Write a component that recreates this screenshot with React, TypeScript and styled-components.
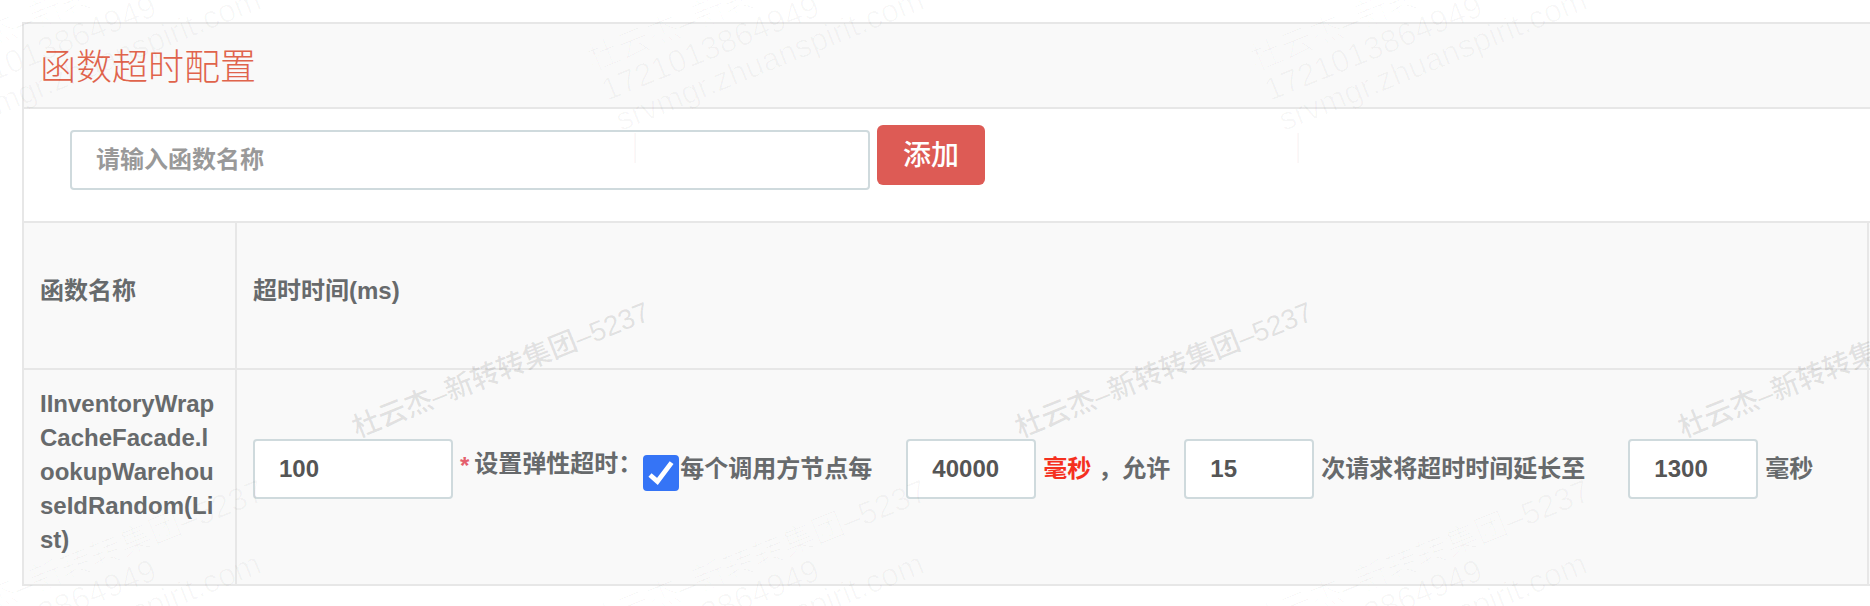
import React, { useState } from 'react';
import styled, { createGlobalStyle } from 'styled-components';

const GlobalStyle = createGlobalStyle`
  *, *::before, *::after { box-sizing: border-box; }
  body {
    margin: 0;
    background: #fff;
    color: #676a6c;
    font-family: "Liberation Sans", "Noto Sans CJK SC", sans-serif;
    font-size: 24px;
    line-height: 34px;
  }
`;

const Page = styled.div`
  position: relative;
  min-height: 100vh;
  padding: 22px 0 20px 22px;
  overflow: hidden;
`;

const Panel = styled.section`
  border: 2px solid #e7e7e7;
  border-width: 2px 0 0 2px;
`;

const PanelHeader = styled.header`
  padding: 18px 16px 13px;
  background: #f9f9f9;
  border-bottom: 2px solid #e7e7e7;
`;

const Title = styled.h1`
  margin: 0;
  color: #e0644c;
  font-size: 36px;
  font-weight: 300;
  line-height: 52px;
`;

const AddForm = styled.form`
  display: flex;
  align-items: flex-start;
  gap: 7px;
  padding: 16px 46px 31px;
`;

const Field = styled.input<{ $width: number }>`
  flex: 0 1 ${(p) => p.$width}px;
  width: ${(p) => p.$width}px;
  min-width: 0;
  height: 60px;
  padding: 0 24px;
  border: 2px solid #cfdadd;
  border-radius: 4px;
  background: #fff;
  color: #555;
  font: inherit;
  font-weight: 700;
  outline: none;

  &::placeholder { color: #999; opacity: 1; }
`;

const NameField = styled(Field)`
  margin-top: 5px;
`;

const AddButton = styled.button`
  flex: none;
  height: 60px;
  padding: 2px 26px 0;
  border: 0;
  border-radius: 6px;
  background: #dd5b55;
  color: #fff;
  font: inherit;
  font-size: 28px;
  font-weight: 500;
  cursor: pointer;
`;

const Table = styled.table`
  width: 100%;
  table-layout: fixed;
  border-spacing: 0;
  border-top: 2px solid #e7e7e7;
  background: #f9f9f9;
`;

const NameCol = styled.col`width: 213px;`;
const EdgeCol = styled.col`width: 1px;`;

const HeadCell = styled.th`
  padding: 51px 16px 60px;
  border: 2px solid #e7e7e7;
  border-width: 0 2px 2px 0;
  text-align: left;
  font-weight: 700;
`;

const NameCell = styled.td`
  padding: 17px 16px 27px;
  border: 2px solid #e7e7e7;
  border-width: 0 2px 2px 0;
  font-weight: 700;
  vertical-align: top;
  word-break: break-all;
`;

const ConfigCell = styled.td`
  padding: 0 16px 16px;
  border: 2px solid #e7e7e7;
  border-width: 0 2px 2px 0;
  vertical-align: middle;
`;

const EdgeCell = styled.td`
  padding: 0;
  border-bottom: 2px solid #e7e7e7;
`;

const Settings = styled.div`
  display: flex;
  align-items: center;
  white-space: nowrap;
`;

const SettingGroup = styled.div<{ $before?: number }>`
  display: flex;
  align-items: center;
  gap: 7px;
  margin-left: ${(p) => p.$before ?? 0}px;
`;

const Text = styled.span<{ $warn?: boolean }>`
  color: ${(p) => (p.$warn ? '#f5301f' : 'inherit')};
  font-weight: 700;
`;

const ElasticLabel = styled.label`
  display: flex;
  gap: 5px;
  padding-bottom: 8px;
  font-weight: 700;
`;

const Required = styled.span`
  padding-top: 2px;
  color: #e4606d;
`;

const CheckBox = styled.span`
  position: relative;
  display: flex;
  margin: 8px 1px 0;

  input {
    appearance: none;
    width: 36px;
    height: 36px;
    margin: 0;
    border: 2px solid #b5b5b5;
    border-radius: 4px;
    background: #fff;
  }
  input:checked { border-color: #3574f6; background: #3574f6; }
  svg {
    position: absolute;
    inset: 0;
    pointer-events: none;
  }
`;

const WatermarkLayer = styled.div`
  position: absolute;
  inset: 0;
  overflow: hidden;
  pointer-events: none;
`;

const Watermark = styled.div<{ $x: number; $y: number; $faint?: boolean; $upright?: boolean }>`
  position: absolute;
  left: ${(p) => p.$x}px;
  top: ${(p) => p.$y}px;
  transform: ${(p) => (p.$upright ? 'none' : 'rotate(-22deg)')};
  transform-origin: 0 50%;
  white-space: nowrap;
  font-size: ${(p) => (p.$faint ? 32 : 28)}px;
  font-weight: ${(p) => (p.$faint ? 300 : 500)};
  color: ${(p) => (p.$faint ? 'rgba(0, 0, 0, 0.026)' : 'rgba(0, 0, 0, 0.1)')};
`;

const OWNER = '杜云杰–新转转集团–5237';
const COLUMNS = [0, 1, 2];
const STEP = 663;

export default function App() {
  const [name, setName] = useState('');
  const [timeout, setTimeoutMs] = useState('100');
  const [elastic, setElastic] = useState(true);
  const [period, setPeriod] = useState('40000');
  const [count, setCount] = useState('15');
  const [extended, setExtended] = useState('1300');

  return (
    <>
      <GlobalStyle />
      <Page>
        <Panel>
          <PanelHeader>
            <Title>函数超时配置</Title>
          </PanelHeader>
          <AddForm onSubmit={(e) => e.preventDefault()}>
            <NameField
              $width={800}
              aria-label="函数名称"
              placeholder="请输入函数名称"
              value={name}
              onChange={(e) => setName(e.target.value)}
            />
            <AddButton type="submit">添加</AddButton>
          </AddForm>
          <Table>
            <colgroup>
              <NameCol />
              <col />
              <EdgeCol />
            </colgroup>
            <thead>
              <tr>
                <HeadCell scope="col">函数名称</HeadCell>
                <HeadCell scope="col">超时时间(ms)</HeadCell>
                <EdgeCell />
              </tr>
            </thead>
            <tbody>
              <tr>
                <NameCell>IInventoryWrapCacheFacade.lookupWarehouseIdRandom(List)</NameCell>
                <ConfigCell>
                  <Settings>
                    <SettingGroup>
                      <Field
                        $width={200}
                        aria-label="超时时间(ms)"
                        value={timeout}
                        onChange={(e) => setTimeoutMs(e.target.value)}
                      />
                      <ElasticLabel htmlFor="elastic">
                        <Required>*</Required>
                        设置弹性超时：
                      </ElasticLabel>
                    </SettingGroup>
                    <CheckBox>
                      <input
                        id="elastic"
                        type="checkbox"
                        checked={elastic}
                        onChange={(e) => setElastic(e.target.checked)}
                      />
                      {elastic && (
                        <svg width="36" height="36" viewBox="0 0 36 36" aria-hidden="true">
                          <path d="M7 20 L14.4 26.4 L28.6 7.6" fill="none" stroke="#fff" strokeWidth="4.8" />
                        </svg>
                      )}
                    </CheckBox>
                    <Text>每个调用方节点每</Text>
                    <SettingGroup $before={34}>
                      <Field
                        $width={130}
                        aria-label="周期(毫秒)"
                        value={period}
                        onChange={(e) => setPeriod(e.target.value)}
                      />
                      <Text $warn>毫秒</Text>
                      <Text>，允许</Text>
                    </SettingGroup>
                    <SettingGroup $before={14}>
                      <Field
                        $width={130}
                        aria-label="允许次数"
                        value={count}
                        onChange={(e) => setCount(e.target.value)}
                      />
                      <Text>次请求将超时时间延长至</Text>
                    </SettingGroup>
                    <SettingGroup $before={43}>
                      <Field
                        $width={130}
                        aria-label="延长至(毫秒)"
                        value={extended}
                        onChange={(e) => setExtended(e.target.value)}
                      />
                      <Text>毫秒</Text>
                    </SettingGroup>
                  </Settings>
                </ConfigCell>
                <EdgeCell />
              </tr>
            </tbody>
          </Table>
        </Panel>
        <WatermarkLayer aria-hidden="true">
          {COLUMNS.map((c) => (
            <React.Fragment key={c}>
              <Watermark $x={354 + c * STEP} $y={413}>{OWNER}</Watermark>
              {c > 0 && <Watermark $faint $upright $x={-32 + c * STEP} $y={128}>|</Watermark>}
              {[0, 564].map((dy) => (
                <React.Fragment key={dy}>
                  <Watermark $faint $x={-74 + c * STEP} $y={44 + dy}>{OWNER}</Watermark>
                  <Watermark $faint $x={-60 + c * STEP} $y={74 + dy}>1721013864949</Watermark>
                  <Watermark $faint $x={-46 + c * STEP} $y={104 + dy}>srvmgr.zhuanspirit.com</Watermark>
                </React.Fragment>
              ))}
            </React.Fragment>
          ))}
        </WatermarkLayer>
      </Page>
    </>
  );
}
